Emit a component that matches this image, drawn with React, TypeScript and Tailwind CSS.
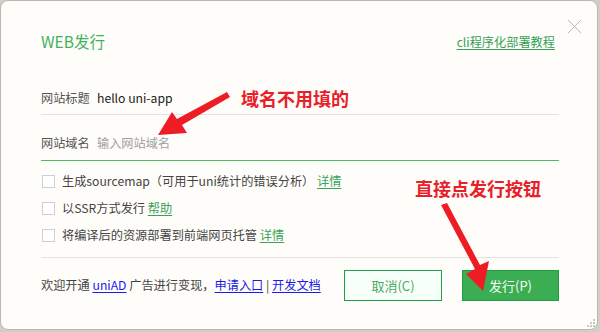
import React from "react";

const font = { fontFamily: '"Noto Sans CJK SC", "Noto Sans", sans-serif' };

function Check({ children }: { children: React.ReactNode }) {
  return (
    <div className="flex h-[27px] items-center">
      <span className="ml-px box-border h-[13px] w-[13px] border border-[#cfcfcf] bg-white" />
      <span className="ml-[7px] text-[12.2px] text-[#444]">{children}</span>
    </div>
  );
}

export default function App() {
  return (
    <div className="h-[332px] w-[600px] bg-[#cfcfc8]" style={font}>
      <div className="relative box-border h-[330px] w-[598px] rounded-[8px] border border-[#b8b8b0] bg-[#fffdf9] pl-[40px] pr-[38px] pt-[31px]">
        {/* close */}
        <svg className="absolute left-[566px] top-[18px]" width="15" height="15" viewBox="0 0 15 15">
          <path d="M1 1L14 14M14 1L1 14" stroke="#b5b5b5" strokeWidth="1" />
        </svg>
        {/* grip */}
        <svg className="absolute bottom-[1px] right-[1px]" width="10" height="10" viewBox="0 0 10 10">
          <rect x="7" y="1" width="2" height="2" fill="#c8c8c8" />
          <rect x="4" y="4" width="2" height="2" fill="#c8c8c8" />
          <rect x="7" y="4" width="2" height="2" fill="#c8c8c8" />
          <rect x="1" y="7" width="2" height="2" fill="#c8c8c8" />
          <rect x="4" y="7" width="2" height="2" fill="#c8c8c8" />
          <rect x="7" y="7" width="2" height="2" fill="#c8c8c8" />
        </svg>

        <div className="flex h-5 items-center justify-between">
          <span className="text-[15.5px] text-[#3fb261]">WEB发行</span>
          <span className="mr-[4px] text-[12.2px] text-[#35a156] underline underline-offset-2">cli程序化部署教程</span>
        </div>

        <div className="mt-[31px] box-border flex h-[32px] items-center border-b border-[#e3e3e3] text-[12.2px]">
          <span className="w-[56px] text-[#555]">网站标题</span>
          <span className="text-[#222]">hello uni-app</span>
        </div>

        <div className="box-border flex h-[46px] items-center border-b border-[#44c05c] pt-[11px] text-[12.2px]">
          <span className="w-[56px] text-[#555]">网站域名</span>
          <span className="text-[#a0a0a0]">输入网站域名</span>
        </div>

        <div className="mt-[7px]">
          <Check>
            生成sourcemap（可用于uni统计的错误分析） <span className="text-[#3aa35a] underline underline-offset-2">详情</span>
          </Check>
          <Check>
            以SSR方式发行 <span className="text-[#3aa35a] underline underline-offset-2">帮助</span>
          </Check>
          <Check>
            将编译后的资源部署到前端网页托管 <span className="text-[#3aa35a] underline underline-offset-2">详情</span>
          </Check>
        </div>

        <div className="mt-[8px] border-t border-[#e3e3e3]" />

        <div className="mt-[12px] flex h-[31px] items-center">
          <span className="text-[12.2px] text-[#444]">
            欢迎开通 <span className="text-[#1a1aee] underline underline-offset-2">uniAD</span> 广告进行变现，
            <span className="text-[#1a1aee] underline underline-offset-2">申请入口</span> |{" "}
            <span className="text-[#1a1aee] underline underline-offset-2">开发文档</span>
          </span>
          <div className="ml-auto flex gap-[20px]">
            <div className="box-border flex h-[31px] w-[98px] items-center justify-center border border-[#1f9e4a] bg-[#f7fff9] text-[13px] text-[#4ea766]">
              取消(C)
            </div>
            <div className="box-border flex h-[31px] w-[97px] items-center justify-center border border-[#1f9e45] bg-[#3bad52] text-[13px] text-[#f4fff4]">
              发行(P)
            </div>
          </div>
        </div>

        {/* annotations */}
        <span className="absolute left-[240px] top-[85px] text-[18px] font-bold leading-[24px] text-[#e8202a]">域名不用填的</span>
        <span className="absolute left-[414px] top-[175px] text-[18px] font-bold leading-[24px] text-[#e8202a]">直接点发行按钮</span>
        <svg className="absolute left-0 top-0" width="598" height="330" viewBox="0 0 598 330">
          <polygon points="157,134 171,111 176,118 226,91 229,96 181,124 186,132" fill="#ee1c25" />
          <polygon points="440,204 446,202 479,264 488,260 482,290 465,273 474,268" fill="#ee1c25" />
        </svg>
      </div>
    </div>
  );
}
